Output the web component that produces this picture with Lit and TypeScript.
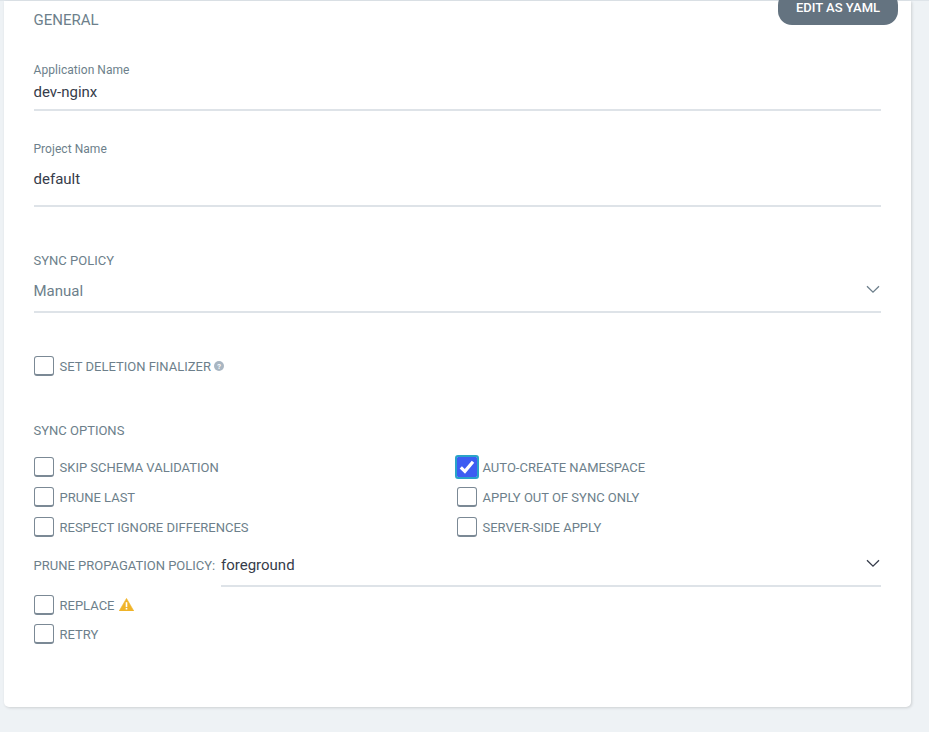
import { LitElement, html, css, nothing } from "lit";
import { customElement } from "lit/decorators.js";

const chevron = html`<svg class="chev" width="14" height="9" viewBox="0 0 14 9"><path d="M1 1.2 L7 7.2 L13 1.2" fill="none" stroke="currentColor" stroke-width="1.3"/></svg>`;

@customElement("app-root")
export class AppRoot extends LitElement {
  static styles = css`
    :host { display: block; height: 732px; background: #eef2f5; font-family: Roboto, "Liberation Sans", sans-serif; overflow: hidden; position: relative; }
    .topline { height: 1px; background: #dee4e9; }
    .card { position: relative; box-sizing: border-box; margin-left: 4px; width: 907px; height: 706px; background: #fff; border-radius: 0 0 5px 5px; box-shadow: 1px 1px 3px rgba(0,0,0,.14); padding: 0 30px 0 29.5px; color: #6d7f8b; overflow: visible; }
    .yaml { position: absolute; top: -10px; right: 13px; width: 120px; height: 34px; border-radius: 14px; background: #647380; color: #fff; font-size: 13px; font-weight: 500; display: flex; align-items: flex-end; justify-content: center; padding-bottom: 10px; box-sizing: border-box; line-height: 14px; }
    h4 { margin: 0; padding-top: 11px; height: 44px; box-sizing: border-box; font-size: 15px; font-weight: 400; line-height: 16px; color: #6d7f8b; }
    .label { font-size: 12px; line-height: 14px; color: #6d7f8b; letter-spacing: .05px; }
    .value { font-size: 15px; line-height: 18px; color: #363c4a; }
    .rule { height: 2px; background: #dee3e8; }
    .f1 { padding-top: 18px; height: 65px; box-sizing: border-box; }
    .f1 .value { margin-top: 6px; }
    .f1 .rule { margin-top: 8px; }
    .f2 { margin-top: 32px; height: 66px; box-sizing: border-box; }
    .f2 .value { margin-top: 14px; }
    .f2 .rule { margin-top: 17px; }
    .f3 { margin-top: 46px; }
    .f3 .label { font-size: 13px; letter-spacing: 0; }
    .f3 .row { display: flex; justify-content: space-between; align-items: center; margin-top: 14px; height: 18px; }
    .f3 .value { color: #6d7f8b; }
    .f3 .chev { color: #6d7f8b; margin-right: 1px; margin-top: -4px; }
    .f3 .rule { margin-top: 11px; }
    .check { display: flex; align-items: center; height: 20px; gap: 6px; font-size: 13px; color: #6d7f8b; }
    .box { width: 20px; height: 20px; box-sizing: border-box; border: 1px solid #7b8995; border-bottom-width: 2px; border-radius: 3px; background: #fff; flex: none; }
    .box.on { background: #3d5df2; border: 0; border-radius: 1px; outline: 2px solid #2aa3c9; outline-offset: 0; display: flex; align-items: center; justify-content: center; }
    .finalizer { margin-top: 43px; }
    .help { margin-left: -3px; }
    .syncopts { margin-top: 48px; line-height: 14px; font-size: 13px; }
    .grid { display: grid; grid-template-columns: 423px 1fr; row-gap: 10px; margin-top: 19px; }
    .prune { display: grid; grid-template-columns: 187.5px 1fr; margin-top: 18px; font-size: 13px; }
    .prune .label { font-size: 13px; letter-spacing: 0; line-height: 18px; padding-top: 2px; }
    .prune .row { display: flex; justify-content: space-between; align-items: center; height: 19px; }
    .prune .chev { color: #363c4a; margin-right: 1px; margin-top: -3px; }
    .prune .rule { margin-top: 11px; }
    .stack { margin-top: 8px; display: grid; row-gap: 9px; }
    .warn { margin-left: -1px; margin-top: -2px; }
  `;

  private check(label: string, on = false, extra: unknown = nothing) {
    return html`<div class="check">
      <span class="box ${on ? "on" : ""}">${on
        ? html`<svg width="20" height="20" viewBox="0 0 20 20"><path d="M3.8 10.4 L7.9 14.4 L16 4.8" fill="none" stroke="#fff" stroke-width="3.2"/></svg>`
        : nothing}</span>
      <span>${label}</span>${extra}
    </div>`;
  }

  render() {
    const help = html`<svg class="help" width="10" height="10" viewBox="0 0 10 10"><circle cx="5" cy="5" r="5" fill="#a9b6c2"/><text x="5" y="7.6" text-anchor="middle" font-size="7.5" font-weight="700" fill="#fff" font-family="Roboto">?</text></svg>`;
    const warn = html`<svg class="warn" width="15" height="13" viewBox="0 0 15 13"><path d="M7.5 0.4 L14.8 13 H0.2 Z" fill="#f0b429" stroke="#f0b429" stroke-linejoin="round" stroke-width=".6"/><rect x="6.7" y="4.2" width="1.6" height="4.8" fill="#fff"/><rect x="6.7" y="9.9" width="1.6" height="1.6" fill="#fff"/></svg>`;
    return html`
      <div class="topline"></div>
      <div class="card">
        <div class="yaml">EDIT AS YAML</div>
        <h4>GENERAL</h4>
        <div class="f1">
          <div class="label">Application Name</div>
          <div class="value">dev-nginx</div>
          <div class="rule"></div>
        </div>
        <div class="f2">
          <div class="label">Project Name</div>
          <div class="value">default</div>
          <div class="rule"></div>
        </div>
        <div class="f3">
          <div class="label">SYNC POLICY</div>
          <div class="row"><span class="value">Manual</span>${chevron}</div>
          <div class="rule"></div>
        </div>
        <div class="finalizer">${this.check("SET DELETION FINALIZER", false, help)}</div>
        <div class="syncopts">SYNC OPTIONS</div>
        <div class="grid">
          ${this.check("SKIP SCHEMA VALIDATION")}
          ${this.check("AUTO-CREATE NAMESPACE", true)}
          ${this.check("PRUNE LAST")}
          ${this.check("APPLY OUT OF SYNC ONLY")}
          ${this.check("RESPECT IGNORE DIFFERENCES")}
          ${this.check("SERVER-SIDE APPLY")}
        </div>
        <div class="prune">
          <div class="label">PRUNE PROPAGATION POLICY:</div>
          <div>
            <div class="row"><span class="value">foreground</span>${chevron}</div>
            <div class="rule"></div>
          </div>
        </div>
        <div class="stack">
          ${this.check("REPLACE", false, warn)}
          ${this.check("RETRY")}
        </div>
      </div>
    `;
  }
}
